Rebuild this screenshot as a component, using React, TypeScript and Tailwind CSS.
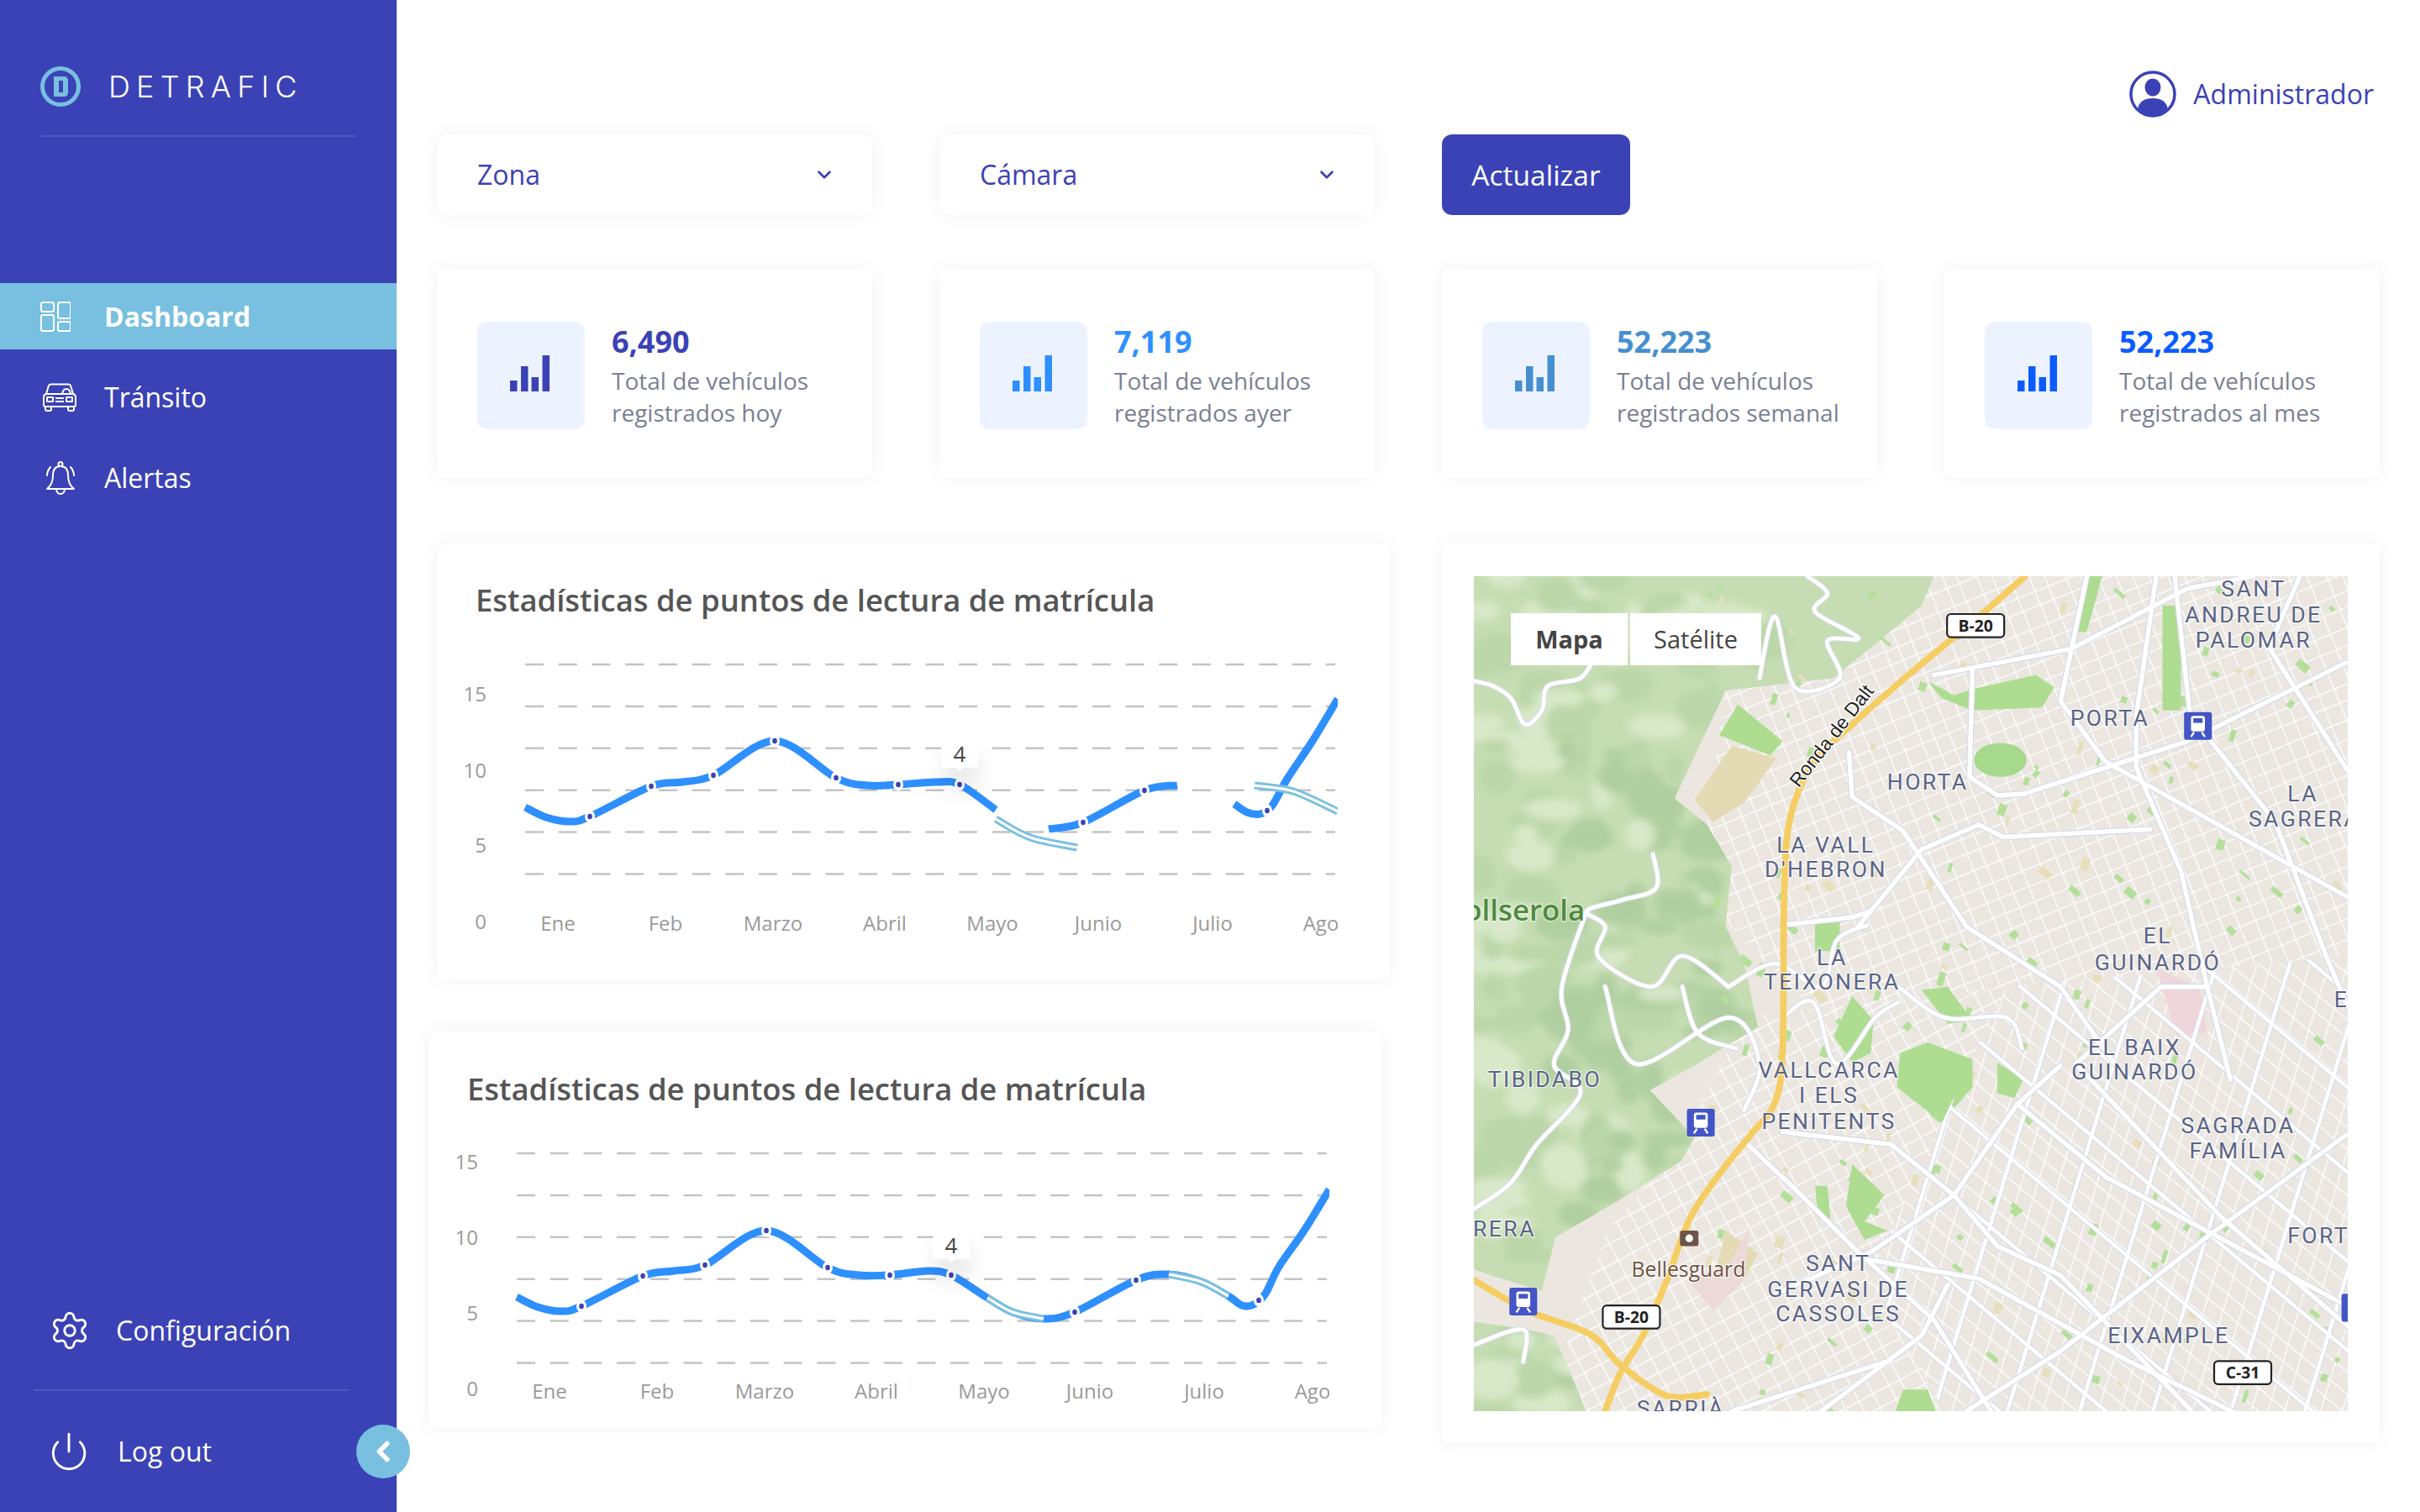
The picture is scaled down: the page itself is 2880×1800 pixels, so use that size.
import React from 'react';
import { Settings, Power, ChevronLeft, ChevronDown } from 'lucide-react';

// small seeded random so the map texture stays the same on every load
const makeRandom = (seed: number) => {
  let s = seed;
  return () => {
    s = (s * 16807) % 2147483647;
    return (s - 1) / 2147483646;
  };
};

type Pt = [number, number];

const smooth = (pts: Pt[]) => {
  let d = `M${pts[0][0]},${pts[0][1]}`;
  for (let i = 0; i < pts.length - 1; i++) {
    const p0 = pts[i - 1] || pts[i];
    const p1 = pts[i];
    const p2 = pts[i + 1];
    const p3 = pts[i + 2] || p2;
    const c1x = p1[0] + (p2[0] - p0[0]) / 6;
    const c1y = p1[1] + (p2[1] - p0[1]) / 6;
    const c2x = p2[0] - (p3[0] - p1[0]) / 6;
    const c2y = p2[1] - (p3[1] - p1[1]) / 6;
    d += ` C${c1x},${c1y} ${c2x},${c2y} ${p2[0]},${p2[1]}`;
  }
  return d;
};

const stats = [
  { value: '6,490', color: 'text-[#3b42b5]', bar: '#3b42b5', line1: 'Total de vehículos', line2: 'registrados hoy' },
  { value: '7,119', color: 'text-[#2e8fff]', bar: '#2e8fff', line1: 'Total de vehículos', line2: 'registrados ayer' },
  { value: '52,223', color: 'text-[#458fd1]', bar: '#458fd1', line1: 'Total de vehículos', line2: 'registrados semanal' },
  { value: '52,223', color: 'text-[#0a5cff]', bar: '#0a5cff', line1: 'Total de vehículos', line2: 'registrados al mes' },
];

const months: [string, number][] = [
  ['Ene', 664], ['Feb', 792], ['Marzo', 920], ['Abril', 1053],
  ['Mayo', 1181], ['Junio', 1307], ['Julio', 1443], ['Ago', 1572],
];

const DashboardIcon = () => (
  <svg width="36" height="36" viewBox="0 0 36 36" fill="none" stroke="white" strokeWidth="2">
    <rect x="1" y="1" width="15" height="11" rx="2" />
    <rect x="21" y="1" width="15" height="19" rx="2" />
    <rect x="1" y="16" width="15" height="19" rx="2" />
    <rect x="21" y="24" width="15" height="11" rx="2" />
  </svg>
);

const CarIcon = () => (
  <svg width="42" height="34" viewBox="0 0 42 34" fill="none" stroke="white" strokeWidth="2" strokeLinejoin="round">
    <path d="M5 13 L8 3 Q8.500 1.500 11 1.500 H31 Q33.500 1.500 34 3 L37 13" />
    <path d="M2 17 Q2 13 6 13 H36 Q40 13 40 17 V26 Q40 28 38 28 H4 Q2 28 2 26 Z" />
    <path d="M4 28 V31 Q4 33 6 33 H9 Q11 33 11 31 V28 M31 28 V31 Q31 33 33 33 H36 Q38 33 38 31 V28" />
    <rect x="6" y="17" width="7" height="5" />
    <rect x="29" y="17" width="7" height="5" />
    <path d="M16 18 H26 M16 22 H26" />
    <path d="M24 13 Q25 7 29 7 Q33 7 34 13" />
  </svg>
);

const BellIcon = () => (
  <svg width="36" height="40" viewBox="0 0 36 40" fill="none" stroke="white" strokeWidth="2" strokeLinecap="round" strokeLinejoin="round">
    <circle cx="18" cy="3.500" r="2.500" />
    <path d="M18 6 C11 6 9 11 9 17 C9 24 7 29 2 33 H34 C29 29 27 24 27 17 C27 11 25 6 18 6 Z" />
    <path d="M13 33 C13 41 23 41 23 33" />
    <path d="M6 7 C3.500 10 2 13 2 17 M30 7 C32.500 10 34 13 34 17" />
  </svg>
);

const BarsIcon = ({ color }: { color: string }) => (
  <svg width="47" height="43" viewBox="0 0 47 43" fill={color}>
    <rect x="0" y="30" width="8.500" height="13" />
    <rect x="13" y="13" width="8.500" height="30" />
    <rect x="25.500" y="26" width="8.500" height="17" />
    <rect x="38.500" y="0" width="8.500" height="43" />
  </svg>
);

const UserIcon = () => (
  <svg width="56" height="56" viewBox="0 0 56 56" fill="#3b42b5">
    <circle cx="28" cy="28" r="26" fill="none" stroke="#3b42b5" strokeWidth="3.500" />
    <ellipse cx="28" cy="20" rx="9.500" ry="10.500" />
    <path d="M10 47 C11 37 18 33 28 33 C38 33 45 37 46 47 C41 52 35 54 28 54 C21 54 15 52 10 47 Z" />
  </svg>
);

const LogoMark = () => (
  <svg width="48" height="48" viewBox="0 0 48 48" fill="none">
    <circle cx="24" cy="24" r="21.500" stroke="#78bfe0" strokeWidth="5" />
    <path fillRule="evenodd" d="M16 12 H28 Q33 12 33 17 V31 Q33 36 28 36 H16 Z M22 17 V31 H27 V17 Z" fill="#78bfe0" />
  </svg>
);

const Chart = ({
  height,
  gridTop,
  yLabels,
  xLabelY,
  segments,
  accents,
  dots,
  tooltip,
}: {
  height: number;
  gridTop: number;
  yLabels: [string, number][];
  xLabelY: number;
  segments: Pt[][];
  accents: Pt[][];
  dots: Pt[];
  tooltip: Pt;
}) => (
  <svg width="1134" height={height} viewBox={`0 0 1134 ${height}`} className="absolute left-0 top-0">
    {[0, 1, 2, 3, 4, 5].map((i) => (
      <line key={i} x1="105" x2="1069" y1={gridTop + i * 49.900} y2={gridTop + i * 49.900} stroke="#c4c4c4" strokeWidth="2.500" strokeDasharray="22 17.700" />
    ))}
    {yLabels.map(([label, y]) => (
      <text key={label} x="59" y={y + 10} textAnchor="end" className="fill-[#9a9a9a] text-[24px] font-['Open_Sans',sans-serif]">{label}</text>
    ))}
    {months.map(([label, x]) => (
      <text key={label} x={x - 520} y={xLabelY + 11} textAnchor="middle" className="fill-[#9a9a9a] text-[24px] font-['Open_Sans',sans-serif]">{label}</text>
    ))}
    {segments.map((s, i) => (
      <path key={i} d={smooth(s)} fill="none" stroke="#2e8fff" strokeWidth="9" />
    ))}
    {accents.map((s, i) => (
      <g key={i}>
        <path d={smooth(s)} fill="none" stroke="#7cc0e0" strokeWidth="9" />
        <path d={smooth(s)} fill="none" stroke="white" strokeWidth="3" />
      </g>
    ))}
    <rect x="1072" y="0" width="20" height={height} fill="white" />
    {dots.map(([x, y], i) => (
      <g key={i}>
        <ellipse cx={x} cy={y} rx="6" ry="7.500" fill="white" />
        <ellipse cx={x} cy={y} rx="2.800" ry="3.300" fill="#3b42b5" />
      </g>
    ))}
    <defs>
      <filter id="tipGlow" x="-80%" y="-80%" width="260%" height="260%">
        <feGaussianBlur stdDeviation="12" />
      </filter>
    </defs>
    <rect x={tooltip[0] - 20} y={tooltip[1] - 24} width="44" height="44" fill="#000" opacity="0.08" filter="url(#tipGlow)" />
    <path d={`M${tooltip[0] - 22} ${tooltip[1] - 40} h44 v33 h-18 l-4 4 l-4 -4 h-18 Z`} fill="white" />
    <text x={tooltip[0]} y={tooltip[1] - 14} textAnchor="middle" className="fill-[#444] text-[26px] font-['Open_Sans',sans-serif]">4</text>
  </svg>
);

// Map: every coordinate is in the 566x541 box that the viewBox below names
const hillPath =
  'M955,374 L1253,374 L1245,393 L1221,413 L1188,440 L1118,448 L1110,465 L1085,518 L1106,535 L1122,562 L1118,601 L1130,625 L1139,666 L1098,691 L1069,707 L1098,738 L1089,753 L1048,779 L1008,802 L999,837 L966,827 L955,823 Z M955,857 L987,862 L1007,866 L1028,915 L955,915 Z';

const streetFamily = (angle: number, spacing: number, seed: number) => {
  const r = makeRandom(seed);
  const rad = (angle * Math.PI) / 180;
  const dx = Math.cos(rad);
  const dy = Math.sin(rad);
  const out: string[] = [];
  for (let k = -90; k < 90; k++) {
    const ox = 1240 - dy * k * spacing + (r() - 0.5) * 3;
    const oy = 640 + dx * k * spacing + (r() - 0.5) * 3;
    out.push(`M${ox - dx * 800},${oy - dy * 800} L${ox + dx * 800},${oy + dy * 800}`);
  }
  return out.join(' ');
};

const scatter = (seed: number, count: number, x0: number, x1: number, y0: number, y1: number, w: number, h: number) => {
  const r = makeRandom(seed);
  const out: { x: number; y: number; w: number; h: number; a: number }[] = [];
  for (let i = 0; i < count; i++) {
    out.push({
      x: x0 + r() * (x1 - x0),
      y: y0 + r() * (y1 - y0),
      w: w * (0.5 + r()),
      h: h * (0.5 + r()),
      a: r() > 0.5 ? 40 : 107,
    });
  }
  return out;
};

const greenBits = scatter(11, 130, 1110, 1521, 374, 915, 6, 3.500);
const tanBits = scatter(29, 55, 1110, 1521, 374, 915, 6, 4);
const hillBlobs = scatter(47, 260, 955, 1150, 374, 915, 13, 9);

const toPts = (s: string): Pt[] => s.split(' ').map((p) => p.split(',').map(Number) as Pt);

const majorRoads = [
  '1253,438 1342,421 1417,382 1460,374',
  '1409,374 1419,465 1434,483 1474,533 1507,620 1521,653',
  '1397,374 1384,465 1384,498 1413,565 1430,640 1445,700',
  '1278,434 1276,504 1294,516 1311,515 1417,481 1520,430',
  '1389,508 1521,582',
  '1352,374 1335,455 1364,494 1389,508',
  '1198,488 1200,517 1233,539 1274,601 1335,640 1370,690',
  '1282,535 1245,551 1212,591 1204,601',
  '1282,535 1298,543 1393,538',
  '1335,691 1307,716 1266,775 1212,812 1155,837',
  '1155,734 1225,742 1266,775 1294,808 1335,827 1420,915',
  '1130,740 1163,771 1204,812 1253,856 1290,915',
  '1307,716 1364,763 1521,847',
  '1520,736 1430,802 1335,876 1274,915',
  '1212,817 1282,829 1376,881 1446,915',
  '1262,833 1245,866 1180,915',
  '1122,915 1225,882',
  '1345,690 1440,790 1521,860',
  '1490,374 1470,420 1521,500',
  '1155,600 1200,595 1212,591',
  '1430,640 1400,640 1345,690',
];

const hillRoads = [
  '1171,374 1184,385 1176,397 1204,414 1184,416 1192,440 1163,446 1150,400 1140,440',
  '955,442 967,445 979,453 988,470 999,461 1003,445 1024,440 1034,425',
  '1071,554 1073,576 1050,584 1028,591 1040,601 1036,621 1070,640 1090,620 1120,640',
  '1028,591 1012,640 1016,668 1007,691 1024,709 995,743 979,767 955,784',
  '955,872 987,862 987,883',
  '1040,640 1060,690 1120,660 1140,690 1130,720',
  '1120,640 1150,625 1180,640 1190,610 1210,600',
  '1155,660 1175,650 1190,690 1215,660 1230,650',
  '1230,640 1260,660 1300,660 1310,680',
  '1090,640 1100,670 1125,680',
];

const parks = [
  '1249,442 1266,451 1278,447 1319,438 1331,446 1323,459 1278,461 1258,453',
  '1126,457 1155,481 1147,490 1114,477',
  '1401,393 1413,393 1413,461 1401,461',
  '1176,597 1192,597 1192,617 1176,617',
  '1200,646 1214,662 1212,683 1200,689 1188,672',
  '1249,676 1278,687 1278,705 1258,728 1229,705 1231,683',
  '1245,642 1262,640 1278,662 1262,664',
  '1294,689 1311,700 1305,712 1294,709',
  '1200,755 1221,775 1208,792 1223,798 1208,804 1196,782',
  '1176,769 1184,769 1186,790 1178,790',
  '1233,901 1249,901 1254,915 1228,915',
  '1350,374 1362,374 1352,410 1344,410',
];

const tanPatches = [
  '1098,519 1122,484 1151,492 1130,521 1110,533',
  '1118,798 1139,813 1130,830 1112,823',
];

const Map = () => (
  <svg viewBox="955 374 566 541" width="1040" height="994" className="block">
    <defs>
      <clipPath id="mapBox"><rect x="955" y="374" width="566" height="541" /></clipPath>
      <clipPath id="hillClip"><path d={hillPath} /></clipPath>
      <clipPath id="north"><path d="M1253,374 L1521,374 L1521,620 L1300,640 L1180,660 L1120,600 L1106,535 L1118,448 L1188,440 Z" /></clipPath>
      <clipPath id="south"><path d="M1300,640 L1521,620 L1521,915 L1260,915 L1210,830 Z" /></clipPath>
      <clipPath id="west"><path d="M1130,660 L1300,640 L1210,830 L1260,915 L1000,915 L1040,800 L1090,740 Z" /></clipPath>
      <filter id="soft"><feGaussianBlur stdDeviation="0.250" /></filter>
      <filter id="softer"><feGaussianBlur stdDeviation="2.500" /></filter>
    </defs>
    <g clipPath="url(#mapBox)">
      <g filter="url(#soft)">
        <rect x="955" y="374" width="566" height="541" fill="#ebe7e0" />
        <g fill="none" stroke="#fbfbfd" strokeWidth="0.800">
          <path clipPath="url(#north)" d={streetFamily(68, 10.500, 3)} />
          <path clipPath="url(#north)" d={streetFamily(-22, 11, 5)} />
          <path clipPath="url(#south)" d={streetFamily(40, 11, 7)} />
          <path clipPath="url(#south)" d={streetFamily(107, 11.500, 9)} />
          <path clipPath="url(#west)" d={streetFamily(62, 10.500, 13)} />
          <path clipPath="url(#west)" d={streetFamily(-28, 11, 17)} />
        </g>
        <path d={hillPath} fill="#c6ddb3" />
        <g clipPath="url(#hillClip)" filter="url(#softer)">
          {hillBlobs.map((b, i) => (
            <ellipse key={i} cx={b.x} cy={b.y} rx={b.w} ry={b.h} fill={b.y > 480 && b.x > 1010 && i % 3 ? '#b0cfa0' : i % 2 ? '#bcd7a9' : '#d8e8c9'} />
          ))}
        </g>
        {tanBits.map((b, i) => (
          <rect key={i} x={b.x} y={b.y} width={b.w} height={b.h} transform={`rotate(${b.a} ${b.x} ${b.y})`} fill="#e6dfba" />
        ))}
        {greenBits.map((b, i) => (
          <rect key={i} x={b.x} y={b.y} width={b.w} height={b.h} transform={`rotate(${b.a} ${b.x} ${b.y})`} fill="#b4df9b" />
        ))}
        {tanPatches.map((p) => <polygon key={p} points={p} fill="#e4dab3" />)}
        {parks.map((p) => <polygon key={p} points={p} fill="#aedd92" />)}
        <ellipse cx="1296" cy="493" rx="17" ry="11" fill="#a6d98c" />
        <polygon points="1397,628 1425,640 1430,670 1410,672" fill="#efd6da" />
        <polygon points="1134,795 1120,820 1094,830 1110,850 1130,830" fill="#ecd9d8" />
        <g fill="none" strokeLinejoin="round" strokeLinecap="round">
          <path clipPath="url(#south)" d={streetFamily(40, 44, 19)} stroke="#d5d9e8" strokeWidth="3.400" />
          <path clipPath="url(#south)" d={streetFamily(107, 46, 23)} stroke="#d5d9e8" strokeWidth="3.400" />
          <path clipPath="url(#south)" d={streetFamily(40, 44, 19)} stroke="#ffffff" strokeWidth="2.400" />
          <path clipPath="url(#south)" d={streetFamily(107, 46, 23)} stroke="#ffffff" strokeWidth="2.400" />
          {hillRoads.map((r) => <path key={r} d={smooth(toPts(r))} stroke="#d7dce8" strokeWidth="3.600" />)}
          {majorRoads.map((r) => <polyline key={r} points={r} stroke="#d5d9e8" strokeWidth="4.200" />)}
          {hillRoads.map((r) => <path key={`w${r}`} d={smooth(toPts(r))} stroke="#ffffff" strokeWidth="2.500" />)}
          {majorRoads.map((r) => <polyline key={`w${r}`} points={r} stroke="#ffffff" strokeWidth="3" />)}
          <path d={smooth(toPts('1312,374 1280,402 1240,435 1200,470 1175,495 1160,530 1156,580 1155,680 1150,715 1135,735 1115,760 1095,790 1080,830 1065,865 1050,890 1040,915'))} stroke="#f5cd62" strokeWidth="4.200" />
          <path d={smooth(toPts('955,830 990,850 1030,865 1050,885 1080,905 1106,904'))} stroke="#f5cd62" strokeWidth="4.200" />
        </g>
      </g>
      <MapLabels />
      <Shield x={1280} y={406} label="B-20" />
      <Shield x={1057} y={854} label="B-20" />
      <Shield x={1453} y={890} label="C-31" />
      <Station x={1424} y={471} />
      <Station x={1102} y={728} />
      <Station x={987} y={844} />
      <Station x={1526} y={848} />
      <rect x="1088.500" y="798" width="12" height="10" rx="1.500" fill="#6d5447" />
      <circle cx="1094.500" cy="803" r="2.500" fill="white" />
      <text transform="rotate(-52 1190 480)" x="1190" y="480" textAnchor="middle" className="fill-[#222] text-[12.500px] font-['Liberation_Sans',sans-serif]" stroke="white" strokeWidth="1.500" paintOrder="stroke">Ronda de Dalt</text>
    </g>
  </svg>
);

const labels: [string, number, number][] = [
  ['SANT', 1460, 387], ['ANDREU DE', 1460, 404], ['PALOMAR', 1460, 420],
  ['PORTA', 1367, 471], ['LA', 1492, 520], ['SAGRERA', 1493, 536],
  ['HORTA', 1249, 512], ['LA VALL', 1183, 553], ["D'HEBRON", 1183, 569],
  ['EL', 1398, 612], ['GUINARDÓ', 1398, 629], ['E', 1517, 653],
  ['LA', 1187, 626], ['TEIXONERA', 1187, 642],
  ['EL BAIX', 1383, 684], ['GUINARDÓ', 1383, 700],
  ['TIBIDABO', 1001, 705], ['VALLCARCA', 1185, 699], ['I ELS', 1185, 715], ['PENITENTS', 1185, 732],
  ['SAGRADA', 1450, 735], ['FAMÍLIA', 1450, 751], ['SERRERA', 960, 802],
  ['FORT', 1502, 806], ['SANT', 1191, 824], ['GERVASI DE', 1191, 841], ['CASSOLES', 1191, 857],
  ['EIXAMPLE', 1405, 871], ['SARRIÀ', 1089, 918],
];

const MapLabels = () => (
  <g>
    {labels.map(([t, x, y]) => (
      <text key={`${t}${y}`} x={x} y={y} textAnchor="middle" stroke="white" strokeOpacity="0.6" strokeWidth="1.500" paintOrder="stroke" className="fill-[#5a6488] text-[14.500px] tracking-[1.300px] font-['Roboto',sans-serif]">{t}</text>
    ))}
    <text x="1027" y="597" textAnchor="end" stroke="white" strokeOpacity="0.5" strokeWidth="1.500" paintOrder="stroke" className="fill-[#4f8a3c] text-[19px] font-semibold font-['Open_Sans',sans-serif]">Collserola</text>
    <text x="1094" y="828" textAnchor="middle" stroke="white" strokeOpacity="0.7" strokeWidth="1.500" paintOrder="stroke" className="fill-[#6d5447] text-[13.500px] font-['Open_Sans',sans-serif]">Bellesguard</text>
  </g>
);

const Shield = ({ x, y, label }: { x: number; y: number; label: string }) => (
  <g>
    <rect x={x - 18.500} y={y - 7.500} width="37" height="15" rx="2.500" fill="white" stroke="#222" strokeWidth="1.200" />
    <text x={x} y={y + 4} textAnchor="middle" className="fill-[#222] text-[10.500px] font-bold font-['Open_Sans',sans-serif]">{label}</text>
  </g>
);

const Station = ({ x, y }: { x: number; y: number }) => (
  <g>
    <rect x={x - 9} y={y - 9} width="18" height="18" rx="1.500" fill="#4355c7" />
    <rect x={x - 4.500} y={y - 6.500} width="9" height="10" rx="1.500" fill="white" />
    <rect x={x - 3} y={y - 5} width="6" height="3" fill="#4355c7" />
    <path d={`M${x - 4.500} ${y + 7} L${x - 2.500} ${y + 4} M${x + 4.500} ${y + 7} L${x + 2.500} ${y + 4}`} stroke="white" strokeWidth="1.300" />
  </g>
);

const App: React.FC = () => {
  return (
    <div className="flex h-[1800px] w-[2880px] overflow-hidden bg-white font-['Open_Sans',sans-serif]">
      {/* Sidebar */}
      <aside className="relative flex w-[472px] shrink-0 flex-col bg-[#3b42b5] text-[32px] text-white">
        <div className="ml-[48px] mt-[79px] flex h-[48px] items-center gap-[33px]">
          <LogoMark />
          <span className="font-['Inter',sans-serif] text-[36px] font-light tracking-[7.200px]">DETRAFIC</span>
        </div>
        <div className="ml-[48px] mt-[34px] h-[2px] w-[376px] bg-[#5157c0]" />

        <nav className="mt-[174px] flex flex-col">
          <div className="flex h-[79px] items-center bg-[#78bfe0] pl-[48px] font-bold">
            <DashboardIcon />
            <span className="ml-[40px]">Dashboard</span>
          </div>
          <div className="mt-[9px] flex h-[96px] items-center pl-[50px]">
            <CarIcon />
            <span className="ml-[32px]">Tránsito</span>
          </div>
          <div className="flex h-[96px] items-center pl-[54px]">
            <BellIcon />
            <span className="ml-[34px]">Alertas</span>
          </div>
        </nav>

        <div className="mt-auto pb-[40px]">
          <div className="flex h-[50px] items-center pl-[58px]">
            <Settings size={50} strokeWidth={1.400} />
            <span className="ml-[30px]">Configuración</span>
          </div>
          <div className="ml-[40px] mt-[45px] h-[2px] w-[376px] bg-[#5157c0]" />
          <div className="relative mt-[40px] flex h-[64px] items-center pl-[57px]">
            <Power size={50} strokeWidth={1.400} />
            <span className="ml-[33px]">Log out</span>
            <div className="absolute -right-[16px] top-0 flex h-[64px] w-[64px] items-center justify-center rounded-full bg-[#78bfe0]">
              <ChevronLeft size={38} strokeWidth={3.500} />
            </div>
          </div>
        </div>
      </aside>

      {/* Main */}
      <main className="flex-1 px-[48px]">
        <header className="flex h-[160px] items-start justify-end pr-[7px] pt-[84px]">
          <UserIcon />
          <span className="ml-[20px] text-[32px] leading-[56px] text-[#3b42b5]">Administrador</span>
        </header>

        <div className="grid grid-cols-4 gap-x-[80px]">
          {['Zona', 'Cámara'].map((name) => (
            <div key={name} className="flex h-[96px] items-center justify-between rounded-xl bg-white pl-[48px] pr-[44px] text-[32px] text-[#3b42b5] shadow-[0_0_22px_rgba(0,0,0,0.06)]">
              <span>{name}</span>
              <ChevronDown size={26} strokeWidth={2.500} />
            </div>
          ))}
          <button className="flex h-[96px] w-[224px] items-center justify-center rounded-xl bg-[#3b42b5] text-[33.500px] font-medium text-white">
            Actualizar
          </button>
        </div>

        <div className="mt-[64px] grid grid-cols-4 gap-x-[80px]">
          {stats.map((s, i) => (
            <div key={i} className="flex h-[248px] items-center gap-[32px] rounded-lg bg-white pl-[48px] pt-[6px] shadow-[0_0_22px_rgba(0,0,0,0.06)]">
              <div className="flex h-[128px] w-[128px] shrink-0 items-center justify-center rounded-xl bg-[#edf3fe] pb-[6px] pr-[4px]">
                <BarsIcon color={s.bar} />
              </div>
              <div>
                <div className={`h-[46px] text-[36px] font-bold leading-[46px] ${s.color}`}>{s.value}</div>
                <div className="mt-[4px] text-[28px] leading-[38px] text-[#7a7f93]">
                  <div>{s.line1}</div>
                  <div>{s.line2}</div>
                </div>
              </div>
            </div>
          ))}
        </div>

        <div className="mt-[79px] grid grid-cols-[1134px_1116px] gap-x-[62px]">
          <div className="flex flex-col">
            <div className="relative h-[520px] rounded-xl bg-white shadow-[0_0_22px_rgba(0,0,0,0.06)]">
              <Chart
                height={520}
                gridTop={144}
                yLabels={[['15', 178], ['10', 269], ['5', 358], ['0', 449]]}
                xLabelY={450}
                segments={[
                  [[105, 314], [130, 326], [158, 331], [182, 325], [255, 289], [292, 284], [329, 276], [402, 235], [475, 279], [512, 288], [549, 287], [594, 284], [622, 287], [665, 317]],
                  [[728, 340], [769, 332], [842, 294], [881, 288]],
                  [[949, 310], [964, 320], [980, 322], [994, 312], [1012, 280], [1042, 235], [1072, 185]],
                ]}
                accents={[
                  [[665, 328], [706, 350], [762, 362]],
                  [[973, 288], [1019, 295], [1072, 319]],
                ]}
                dots={[[182, 325], [255, 289], [329, 276], [402, 235], [475, 279], [549, 287], [622, 287], [769, 332], [842, 294], [988, 318]]}
                tooltip={[622, 274]}
              />
              <h2 className="relative pl-[46px] pt-[44px] text-[36.400px] font-semibold leading-[46px] text-[#555555]">
                Estadísticas de puntos de lectura de matrícula
              </h2>
            </div>
            <div className="relative -ml-[10px] mt-[61px] h-[472px] w-[1134px] rounded-xl bg-white shadow-[0_0_22px_rgba(0,0,0,0.06)]">
              <Chart
                height={472}
                gridTop={145}
                yLabels={[['15', 154], ['10', 244], ['5', 334], ['0', 424]]}
                xLabelY={426}
                segments={[
                  [[105, 316], [130, 328], [158, 333], [182, 327], [255, 291], [292, 285], [329, 278], [402, 237], [475, 281], [512, 290], [549, 290], [594, 285], [622, 290], [665, 317], [695, 334], [732, 342], [769, 334], [842, 296], [881, 289], [920, 298], [952, 315], [968, 326], [982, 325], [996, 312], [1012, 280], [1042, 237], [1072, 188]],
                ]}
                accents={[
                  [[665, 317], [695, 334], [732, 342]],
                  [[881, 289], [920, 298], [952, 315]],
                ]}
                dots={[[182, 327], [255, 291], [329, 278], [402, 237], [475, 281], [549, 290], [622, 290], [769, 334], [842, 296], [988, 320]]}
                tooltip={[622, 278]}
              />
              <h2 className="relative pl-[46px] pt-[45px] text-[36.400px] font-semibold leading-[46px] text-[#555555]">
                Estadísticas de puntos de lectura de matrícula
              </h2>
            </div>
          </div>

          <div className="h-[1070px] rounded-lg bg-white px-[38px] pt-[39px] shadow-[0_0_22px_rgba(0,0,0,0.06)]">
            <div className="relative">
              <Map />
              <div className="absolute left-[44px] top-[44px] flex gap-[3px] text-[29px] text-[#444444]">
                <div className="flex h-[62px] w-[139px] items-center justify-center bg-white font-bold">Mapa</div>
                <div className="flex h-[62px] w-[156px] items-center justify-center bg-white font-medium">Satélite</div>
              </div>
            </div>
          </div>
        </div>
      </main>
    </div>
  );
};

export default App;
